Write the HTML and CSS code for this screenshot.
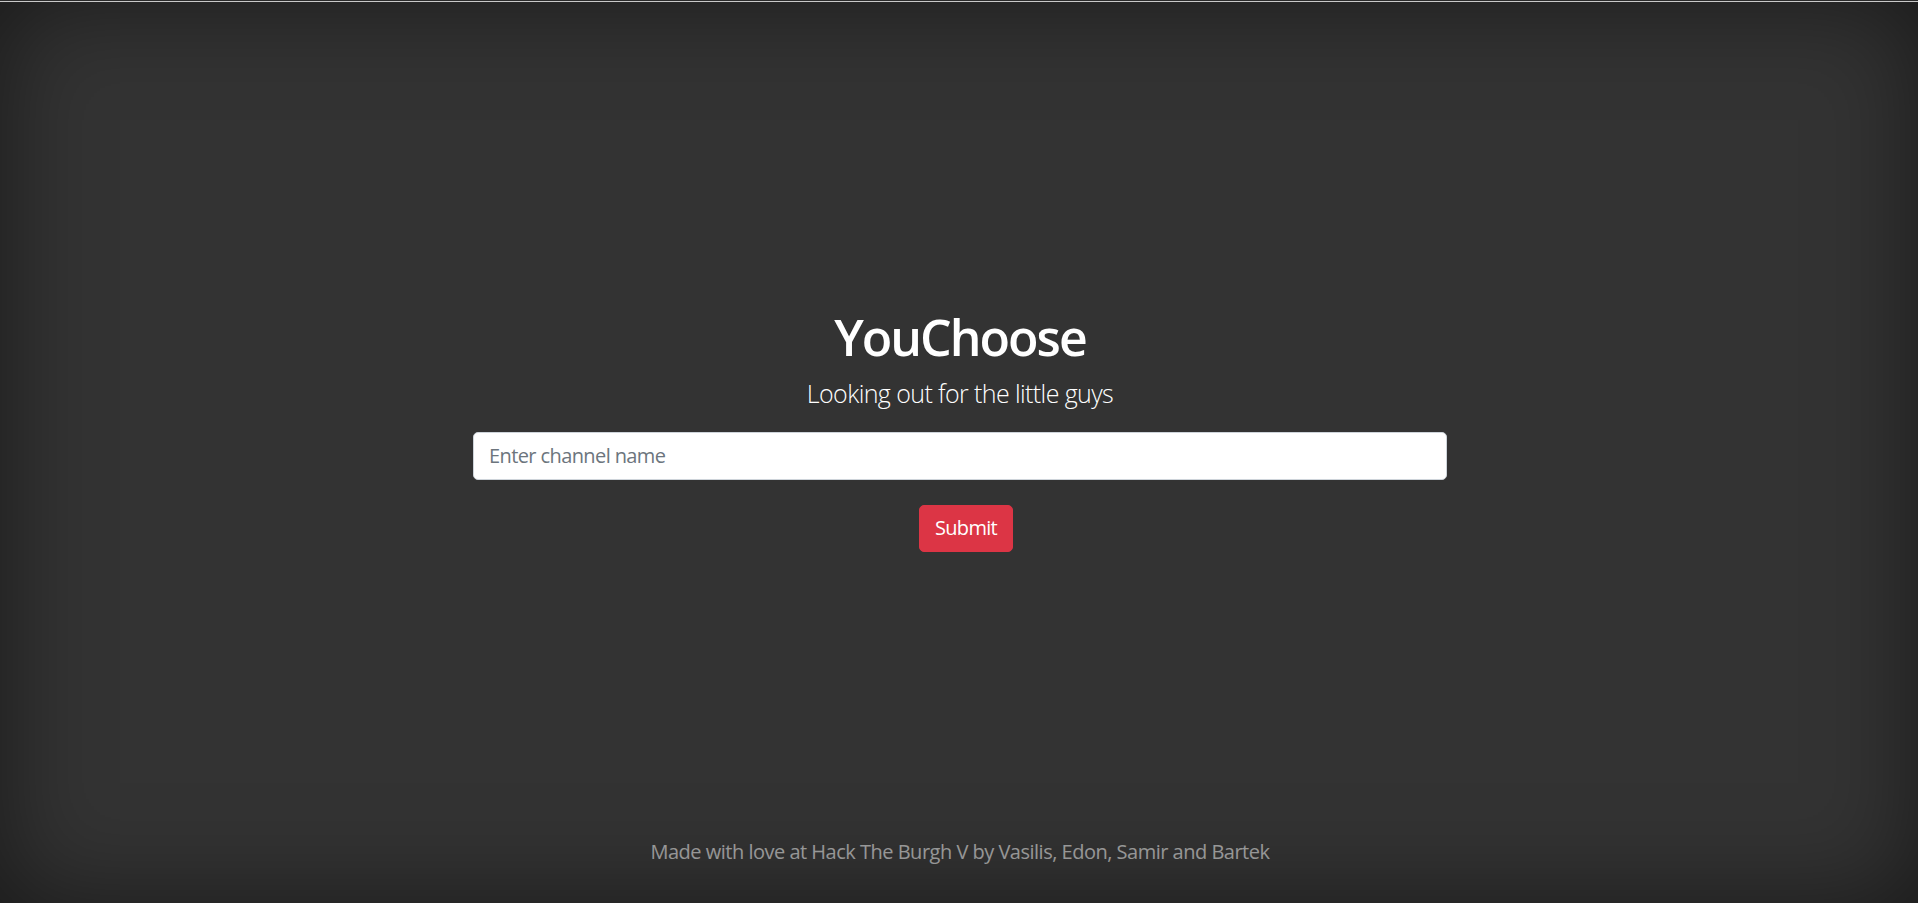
FILE: index.html
```html
<!DOCTYPE html>
<html lang="en">
<head>
    <meta charset="UTF-8">
    <meta name="viewport" content="width=device-width, initial-scale=1.0">
    <title>YouChoose</title>
    <link rel="stylesheet" href="styles.css">
</head>
<body>

    <div class="topline"></div>

    <div class="cover">
        <main class="inner">
            <h1 class="cover-heading">YouChoose</h1>
            <p class="lead">Looking out for the little guys</p>

            <!-- Channel search form -->
            <form id="channel-form">
                <input type="text" class="form-control" id="channel" name="channel" placeholder="Enter channel name">
                <button type="submit" class="btn-submit">Submit</button>
            </form>
        </main>

        <footer class="mastfoot">
            <p>Made with love at Hack The Burgh V by Vasilis, Edon, Samir and Bartek</p>
        </footer>
    </div>

</body>
</html>
```

FILE: styles.css
```css
* {
    margin: 0;
    padding: 0;
    box-sizing: border-box;
}

html, body {
    height: 100%;
    overflow: hidden;
}

body {
    font-family: 'Open Sans', 'Noto Sans', sans-serif;
    background-color: #333;
    color: #fff;
    text-align: center;
    box-shadow: inset 0 0 100px rgba(0, 0, 0, 0.5);
    display: flex;
    flex-direction: column;
}

.topline {
    height: 2px;
    background: linear-gradient(#2b2b2b 50%, #c9c9c9 50%);
    flex-shrink: 0;
}

.cover {
    flex: 1;
    display: flex;
    flex-direction: column;
    width: 976px;
    padding-left: 2px;
    margin: 0 auto;
}

/* Main block */
.inner {
    padding-top: 305px;
}

.cover-heading {
    font-size: 50px;
    font-weight: 600;
    line-height: 60px;
    letter-spacing: -2px;
    margin-bottom: 8px;
}

.lead {
    font-size: 25px;
    font-weight: 300;
    line-height: 37.5px;
    letter-spacing: -0.6px;
    margin-bottom: 19px;
}

.form-control {
    display: block;
    width: 100%;
    height: 48px;
    padding: 7.5px 15px;
    font-family: inherit;
    font-size: 20px;
    line-height: 30px;
    letter-spacing: -0.6px;
    color: #495057;
    background-color: #fff;
    border: 1px solid #ced4da;
    border-radius: 5px;
    outline: none;
}

.form-control::placeholder {
    color: #6c757d;
}

.btn-submit {
    margin-top: 25px;
    margin-left: 12px;
    height: 47px;
    padding: 7.5px 15px;
    font-family: inherit;
    font-size: 20px;
    line-height: 30px;
    letter-spacing: -0.7px;
    color: #fff;
    background-color: #dc3545;
    border: 1px solid #dc3545;
    border-radius: 5px;
    cursor: pointer;
}

.btn-submit:hover {
    background-color: #c82333;
}

/* Footer */
.mastfoot {
    margin-top: auto;
    padding-bottom: 36px;
    color: rgba(255, 255, 255, 0.5);
    font-size: 20px;
    line-height: 30px;
    letter-spacing: -0.5px;
}
```
